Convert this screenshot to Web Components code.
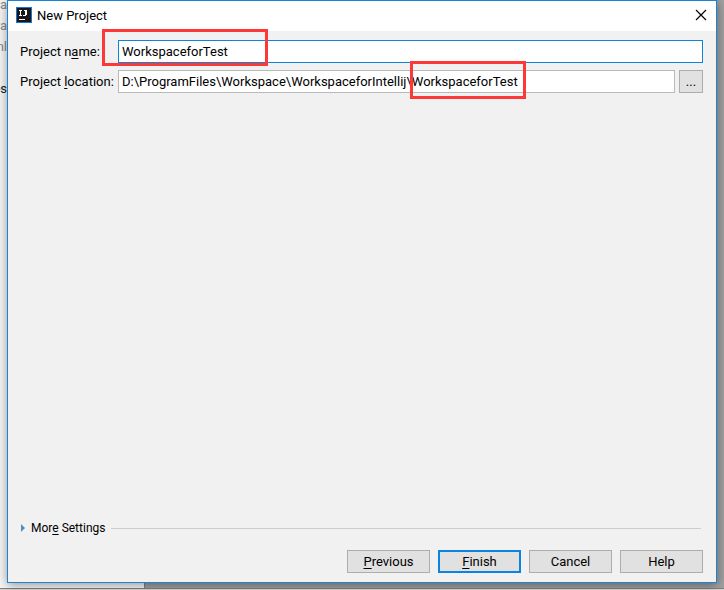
<!DOCTYPE html>
<html lang="en">

<head>
    <meta charset="UTF-8">
    <title>New Project</title>
    <style>
        body {
            margin: 0;
            font: 13px/18px Roboto, "Noto Sans", sans-serif;
            color: #000;
        }
        u {
            text-underline-offset: 2px;
            text-decoration-thickness: 1px;
            text-decoration-skip-ink: none;
        }
    </style>
</head>

<body>

<project-desktop>
    <recent-list slot="behind"></recent-list>
    <dialog-window heading="New Project">
        <form-field value="WorkspaceforTest" active mark="name"><span slot="label">Project n<u>a</u>me:</span></form-field>
        <form-field value="D:\ProgramFiles\Workspace\WorkspaceforIntellij\WorkspaceforTest" mark="location" browse><span slot="label">Project <u>l</u>ocation:</span></form-field>
        <more-settings slot="more">Mor<u>e</u> Settings</more-settings>
        <push-button slot="actions"><u>P</u>revious</push-button>
        <push-button slot="actions" primary><u>F</u>inish</push-button>
        <push-button slot="actions">Cancel</push-button>
        <push-button slot="actions">Help</push-button>
    </dialog-window>
</project-desktop>

<script>
class ProjectDesktop extends HTMLElement {
  constructor() {
    super();
    this.attachShadow({ mode: "open" });
    this.shadowRoot.innerHTML = `
      <style>
        :host {
          display: grid;
          box-sizing: border-box;
          min-height: 100vh;
          overflow: hidden;
          background: #a0a0a0;
        }
        /* the dialog and the window behind it share one cell */
        ::slotted(*) {
          grid-area: 1 / 1;
        }
      </style>
      <slot name="behind"></slot>
      <slot></slot>
    `;
  }
}

class RecentList extends HTMLElement {
  constructor() {
    super();
    this.attachShadow({ mode: "open" });
    this.shadowRoot.innerHTML = `
      <style>
        :host {
          display: flex;
          flex-direction: column;
          border-bottom: 1px solid #d8d8d8;
        }
        .pane {
          flex: 1;
          box-sizing: border-box;
          width: 145px;
          background: #f7f7f7;
          border-right: 1px solid #808080;
          color: #888;
          line-height: 21px;
        }
        .line {
          height: 1px;
          background: #808080;
        }
        .list {
          margin-top: -6px;
        }
        .row {
          width: 7px;
          height: 21px;
          overflow: hidden;
          display: flex;
          justify-content: flex-end;
        }
        .current {
          color: #222;
        }
      </style>
      <div class="pane">
        <div class="list">
          <div class="row">ra</div>
          <div class="row">ra</div>
          <div class="row">nl</div>
          <div class="row"></div>
          <div class="row current">es</div>
        </div>
      </div>
      <div class="line"></div>
    `;
  }
}

class DialogWindow extends HTMLElement {
  constructor() {
    super();
    this.attachShadow({ mode: "open" });
  }

  connectedCallback() {
    this.shadowRoot.innerHTML = `
      <style>
        :host {
          display: flex;
          flex-direction: column;
          margin: 0 7px 7px;
          border: 1px solid #1883d7;
          background: #f1f1f1;
          box-shadow: 0 2px 10px rgba(0, 0, 0, 0.4);
          z-index: 1;
        }
        header {
          display: flex;
          align-items: center;
          gap: 5px;
          height: 30px;
          padding: 0 9px 0 8px;
          background: #fff;
        }
        header > svg {
          margin-bottom: 2px;
        }
        h1 {
          flex: 1;
          margin: 0;
          font: inherit;
        }
        .close {
          display: flex;
          padding: 0;
          margin-bottom: 2px;
          border: 0;
          background: none;
        }
        main {
          flex: 1;
          display: flex;
          flex-direction: column;
          gap: 7px;
          padding: 9px 13px 9px 12px;
        }
        .more {
          margin-top: auto;
        }
        footer {
          display: flex;
          justify-content: flex-end;
          gap: 8px;
          margin-top: 6px;
        }
      </style>
      <header>
        <svg width="16" height="16" viewBox="0 0 16 16" shape-rendering="crispEdges" aria-hidden="true">
          <path fill="#1778d2" d="M0 0h16v16H0z"/>
          <path fill="#18181c" d="M1 1h14v14H1z"/>
          <path fill="#fff" d="M3 3h3v1H5v4h1v1H3V8h1V4H3zM8 3h3v5h-1v1H7V8h2V4H8zM3 12h6v1H3z"/>
        </svg>
        <h1></h1>
        <button class="close" aria-label="Close">
          <svg width="12" height="12" viewBox="0 0 12 12" stroke="#000" stroke-width="1.2">
            <path d="M1 1l10 10M11 1L1 11"/>
          </svg>
        </button>
      </header>
      <main>
        <slot></slot>
        <div class="more"><slot name="more"></slot></div>
        <footer><slot name="actions"></slot></footer>
      </main>
    `;
    this.shadowRoot.querySelector("h1").textContent = this.getAttribute("heading");
  }
}

class FormField extends HTMLElement {
  constructor() {
    super();
    this.attachShadow({ mode: "open" });
  }

  connectedCallback() {
    this.shadowRoot.innerHTML = `
      <style>
        :host {
          display: flex;
          align-items: center;
          gap: 4px;
        }
        label {
          width: 94px;
          white-space: nowrap;
        }
        .box {
          flex: 1;
          display: flex;
          position: relative;
        }
        input {
          flex: 1;
          box-sizing: border-box;
          min-width: 0;
          height: 23px;
          padding: 0 3px;
          border: 1px solid #b9b9b9;
          background: #fff;
          color: inherit;
          font: inherit;
          outline: 0;
        }
        :host([active]) input {
          border-color: #0a84de;
        }
        .browse {
          box-sizing: border-box;
          width: 24px;
          height: 23px;
          padding: 0;
          border: 1px solid #adadad;
          background: #e1e1e1;
          color: inherit;
          font: inherit;
        }
        .mark {
          position: absolute;
          box-sizing: border-box;
          border: 3px solid #fd3836;
          pointer-events: none;
        }
        .name {
          left: -16px;
          top: -11px;
          width: 166px;
          height: 37px;
        }
        .location {
          left: 292px;
          top: -9px;
          width: 116px;
          height: 38px;
        }
      </style>
      <label for="field"><slot name="label"></slot></label>
      <div class="box">
        <input id="field" type="text" spellcheck="false">
        <div class="mark ${this.getAttribute("mark")}"></div>
      </div>
      ${this.hasAttribute("browse") ? `<button class="browse">...</button>` : ""}
    `;
    this.shadowRoot.querySelector("input").value = this.getAttribute("value");
  }
}

class MoreSettings extends HTMLElement {
  constructor() {
    super();
    this.attachShadow({ mode: "open" });
    this.shadowRoot.innerHTML = `
      <style>
        :host {
          display: flex;
          align-items: center;
          gap: 6px;
          padding-right: 2px;
          font-size: 12px;
        }
        button {
          display: flex;
          align-items: center;
          gap: 6px;
          padding: 0;
          border: 0;
          background: none;
          color: inherit;
          font: inherit;
        }
        .rule {
          flex: 1;
          height: 1px;
          background: #cdcdcd;
        }
      </style>
      <button aria-expanded="false">
        <svg width="5" height="8" viewBox="0 0 5 8" aria-hidden="true"><path fill="#4a94bd" d="M1 0l4 4-4 4z"/></svg>
        <span><slot></slot></span>
      </button>
      <div class="rule"></div>
    `;
  }
}

class PushButton extends HTMLElement {
  constructor() {
    super();
    this.attachShadow({ mode: "open" });
    this.shadowRoot.innerHTML = `
      <style>
        :host {
          display: block;
        }
        button {
          display: block;
          box-sizing: border-box;
          width: 83px;
          height: 23px;
          padding: 0;
          border: 1px solid #adadad;
          background: #e1e1e1;
          color: inherit;
          font: inherit;
        }
        :host([primary]) button {
          border: 2px solid #0a84de;
        }
      </style>
      <button><slot></slot></button>
    `;
  }
}

customElements.define("project-desktop", ProjectDesktop);
customElements.define("recent-list", RecentList);
customElements.define("dialog-window", DialogWindow);
customElements.define("form-field", FormField);
customElements.define("more-settings", MoreSettings);
customElements.define("push-button", PushButton);
</script>

</body>

</html>
